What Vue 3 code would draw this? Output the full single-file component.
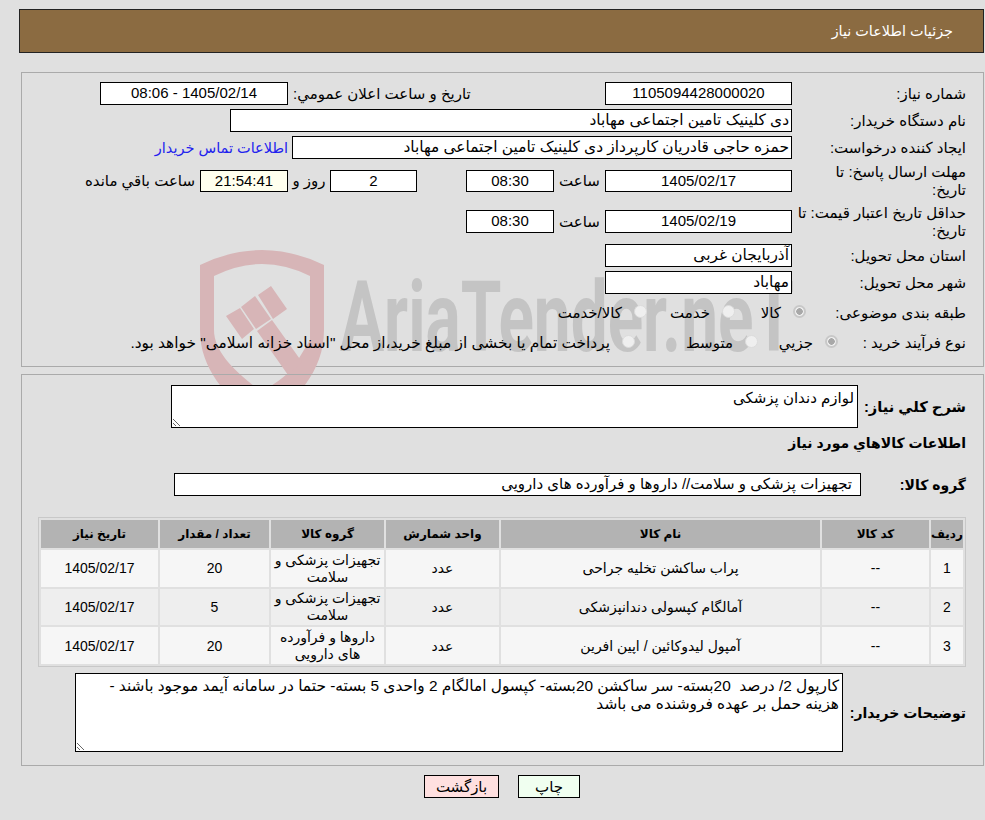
<script setup>
const rows = [
  { id: 1, code: '--', name: 'پراب ساکشن تخلیه جراحی', unit: 'عدد', group: 'تجهیزات پزشکی و سلامت', qty: 20, date: '1405/02/17' },
  { id: 2, code: '--', name: 'آمالگام کپسولی دندانپزشکی', unit: 'عدد', group: 'تجهیزات پزشکی و سلامت', qty: 5, date: '1405/02/17' },
  { id: 3, code: '--', name: 'آمپول لیدوکائین / اپین افرین', unit: 'عدد', group: 'داروها و فرآورده های دارویی', qty: 20, date: '1405/02/17' }
]
</script>

<template>
  <div class="page" dir="rtl">
    <div class="title-bar">جزئیات اطلاعات نیاز</div>

    <div class="panel panel-top">
      <!-- watermark sits behind the form -->
      <div class="watermark" aria-hidden="true">
        <svg class="wm-shield" viewBox="200 250 126 177" width="126" height="177">
          <path d="M200 265 Q262 235 324 265 L324 330 C324 372 296 400 262 425 C230 400 200 372 200 330 Z M214 276 L214 330 C214 352 235 372 262 392 C272 385 284 378 293 368 L310 340 L310 276 Q262 252 214 276 Z" fill="#d7b5b7" fill-rule="evenodd" />
          <path d="M226 316 L240 308 L254 329 L242 339 Z M241 307 L255 296 L271 319 L256 329 Z M258 295 L271 286 L287 309 L273 319 Z M257 331 L272 320 L302 362 L288 375 Z" fill="#d7b5b7" />
        </svg>
        <div class="wm-text">AriaTender.neT</div>
      </div>

      <div class="row">
        <span class="label">شماره نیاز:</span>
        <div class="field w-date">1105094428000020</div>
        <span class="inline-label announce">تاریخ و ساعت اعلان عمومي:</span>
        <div class="field w-announce">1405/02/14 - 08:06</div>
      </div>
      <div class="row">
        <span class="label">نام دستگاه خریدار:</span>
        <div class="field start w-buyer">دی کلینیک تامین اجتماعی مهاباد</div>
      </div>
      <div class="row">
        <span class="label">ایجاد کننده درخواست:</span>
        <div class="field start w-creator">حمزه حاجی قادریان کارپرداز دی کلینیک تامین اجتماعی مهاباد</div>
        <a class="contact" href="#">اطلاعات تماس خریدار</a>
      </div>
      <div class="row row-tall">
        <span class="label">مهلت ارسال پاسخ: تا<br />تاریخ:</span>
        <div class="field w-date">1405/02/17</div>
        <span class="inline-label hour">ساعت</span>
        <div class="field w-time">08:30</div>
        <div class="field w-days">2</div>
        <span class="inline-label days">روز و</span>
        <div class="field w-timer">21:54:41</div>
        <span class="inline-label remain">ساعت باقي مانده</span>
      </div>
      <div class="row row-tall">
        <span class="label">حداقل تاریخ اعتبار قیمت: تا<br />تاریخ:</span>
        <div class="field w-date">1405/02/19</div>
        <span class="inline-label hour">ساعت</span>
        <div class="field w-time">08:30</div>
      </div>
      <div class="row">
        <span class="label">استان محل تحویل:</span>
        <div class="field start w-date">آذربایجان غربی</div>
      </div>
      <div class="row">
        <span class="label">شهر محل تحویل:</span>
        <div class="field start w-date">مهاباد</div>
      </div>
      <div class="row radio-row">
        <span class="label label-subject">طبقه بندی موضوعی:</span>
        <div class="radios subject">
          <label><input type="radio" name="subject" checked disabled />کالا</label>
          <label><input type="radio" name="subject" disabled />خدمت</label>
          <label><input type="radio" name="subject" disabled />کالا/خدمت</label>
        </div>
      </div>
      <div class="row radio-row">
        <span class="label label-process">نوع فرآیند خرید :</span>
        <div class="radios process">
          <label><input type="radio" name="process" checked disabled />جزیي</label>
          <label><input type="radio" name="process" disabled />متوسط</label>
          <label class="long"><input type="radio" name="process" disabled />پرداخت تمام یا بخشی از مبلغ خرید،از محل "اسناد خزانه اسلامی" خواهد بود.</label>
        </div>
      </div>
    </div>

    <div class="panel panel-bottom">
      <div class="desc-row">
        <span class="strong-label">شرح کلي نياز:</span>
        <textarea class="area area-short" readonly>لوازم دندان پزشکی</textarea>
      </div>
      <h3 class="section-title">اطلاعات کالاهاي مورد نياز</h3>
      <div class="group-row">
        <span class="strong-label">گروه کالا:</span>
        <div class="field group-field">تجهیزات پزشکی و سلامت// داروها و فرآورده های دارویی</div>
      </div>

      <table class="items">
        <thead>
          <tr>
            <th class="c-id">ردیف</th>
            <th class="c-code">کد کالا</th>
            <th class="c-name">نام کالا</th>
            <th class="c-unit">واحد شمارش</th>
            <th class="c-group">گروه کالا</th>
            <th class="c-qty">تعداد / مقدار</th>
            <th>تاریخ نیاز</th>
          </tr>
        </thead>
        <tbody>
          <tr v-for="row in rows" :key="row.id">
            <td>{{ row.id }}</td>
            <td>{{ row.code }}</td>
            <td>{{ row.name }}</td>
            <td>{{ row.unit }}</td>
            <td>{{ row.group }}</td>
            <td>{{ row.qty }}</td>
            <td>{{ row.date }}</td>
          </tr>
        </tbody>
      </table>

      <div class="notes-row">
        <span class="strong-label">توضیحات خریدار:</span>
        <textarea class="area area-notes" readonly>کارپول 2/ درصد  20بسته- سر ساکشن 20بسته- کپسول امالگام 2 واحدی 5 بسته- حتما در سامانه آیمد موجود باشند - هزینه حمل بر عهده فروشنده می باشد</textarea>
      </div>
    </div>

    <div class="actions">
      <button class="btn btn-print">چاپ</button>
      <button class="btn btn-back">بازگشت</button>
    </div>
  </div>
</template>

<style>
html, body {
  margin: 0;
  background: #e0e0e0;
}
</style>

<style scoped>
.page {
  width: 985px;
  height: 820px;
  box-sizing: border-box;
  padding-top: 9px;
  font-family: "Liberation Sans", "DejaVu Sans", sans-serif;
  font-size: 15px;
  color: #000;
  overflow: hidden;
}

.title-bar {
  width: 963px;
  height: 42px;
  margin-right: 1px;
  border: 1px solid #222;
  background: #8b6b41;
  color: #fff;
  font-size: 14.4px;
  line-height: 42px;
  text-indent: 30px;
}

.panel {
  position: relative;
  box-sizing: border-box;
  width: 963px;
  margin-right: 1px;
  border: 1px solid #aaa;
}

.panel-top {
  height: 295px;
  margin-top: 19px;
  padding-top: 9px;
}

.panel-bottom {
  height: 392px;
  margin-top: 7px;
  padding-top: 10px;
}

.watermark {
  position: absolute;
  inset: 0;
  z-index: 0;
}

.wm-shield {
  position: absolute;
  left: 178px;
  top: 177px;
}

.wm-text {
  position: absolute;
  left: 318px;
  top: 195px;
  direction: ltr;
  font-family: "Roboto", sans-serif;
  font-weight: 700;
  font-size: 98px;
  line-height: 100px;
  color: #c4c4c4;
  white-space: nowrap;
  transform: scaleX(0.67);
  transform-origin: left top;
}

.row {
  position: relative;
  z-index: 1;
  display: flex;
  align-items: center;
  height: 23px;
  margin-bottom: 4px;
}

.row-tall {
  height: 22px;
  margin-top: 11px;
  margin-bottom: 18px;
}

.row-tall + .row-tall {
  height: 23px;
  margin-top: 18px;
  margin-bottom: 11px;
}

.row-tall .label {
  line-height: 18px;
}

.label {
  flex: none;
  width: 191px;
  padding-right: 17px;
  box-sizing: border-box;
}

.label-subject { width: 177px; }
.label-process { width: 145px; }

.field {
  box-sizing: border-box;
  flex: none;
  height: 100%;
  border: 1px solid #000;
  background: #fff;
  text-align: center;
  line-height: 20px;
  white-space: nowrap;
  overflow: hidden;
}

.field.start {
  text-align: right;
  padding-right: 2px;
  font-size: 15.4px;
}

.w-date { width: 187px; }
.w-announce { width: 188px; }
.w-buyer { width: 562px; }
.w-creator { width: 500px; }
.w-time { width: 88px; }
.w-days { width: 87px; margin-right: 49px; }

.w-timer {
  width: 88px;
  background: #ffffee;
}

.inline-label {
  flex: none;
  white-space: nowrap;
}

.announce {
  width: 317px;
  box-sizing: border-box;
  padding-left: 5px;
  text-align: left;
}

.hour { width: 51px; text-align: center; }
.days { width: 42px; text-align: center; }
.remain { margin-right: 5px; }

.contact {
  margin-right: 4px;
  color: #2222ee;
  font-size: 14.5px;
  text-decoration: none;
  white-space: nowrap;
}

.radio-row {
  height: 26px;
  margin-top: 6px;
  margin-bottom: 0;
}

.radio-row + .radio-row {
  margin-top: 4px;
}

.radios {
  display: flex;
  align-items: center;
}

.radios label {
  display: flex;
  align-items: center;
  white-space: nowrap;
}

.radios label.long {
  font-size: 15.4px;
}

.radios input {
  appearance: none;
  flex: none;
  box-sizing: border-box;
  width: 13px;
  height: 13px;
  margin: -4px 0 0 12px;
  border: 1px solid #dcdcdc;
  border-radius: 50%;
  background: #efefef;
}

.radios input:checked {
  border: 2px solid #c8c8c8;
  background: radial-gradient(circle, #a8a8a8 0 3px, #efefef 3.5px);
}

.subject label:nth-child(1) { width: 71px; }
.subject label:nth-child(2) { width: 88px; }
.process label:nth-child(1) { width: 80px; }
.process label:nth-child(2) { width: 123px; }

.desc-row {
  display: flex;
  align-items: center;
  height: 43px;
}

.strong-label {
  flex: none;
  font-weight: 700;
  font-size: 14px;
  padding-right: 17px;
  box-sizing: border-box;
  white-space: nowrap;
}

.desc-row .strong-label {
  width: 125px;
  font-size: 14.7px;
}

.area {
  display: block;
  box-sizing: border-box;
  margin: 0;
  padding: 3px 3px 2px;
  border: 1px solid #000;
  background: #fff;
  font-family: inherit;
  font-size: 15px;
  line-height: 18px;
  color: #000;
  outline: none;
}

.area-short {
  width: 687px;
  height: 43px;
}

.section-title {
  margin: 0;
  height: 30px;
  padding: 5px 17px 0 0;
  font-size: 14px;
  font-weight: 700;
  line-height: 20px;
}

.group-row {
  display: flex;
  align-items: center;
  height: 23px;
  margin-top: 10px;
}

.group-row .strong-label { width: 122px; }

.group-field {
  width: 687px;
  text-align: right;
  padding-right: 8px;
}

.items {
  width: 928px;
  height: 150px;
  margin: 21px 17px 0 0;
  border: 1px solid #c8c8c8;
  border-spacing: 2px;
  table-layout: fixed;
  box-sizing: border-box;
  font-size: 14px;
}

.items th {
  height: 28px;
  padding: 0;
  background: #b3b3b3;
  font-size: 12px;
  font-weight: 700;
}

.items td {
  padding: 1px 2px 0;
  text-align: center;
  line-height: 17px;
  background: #f6f6f6;
}

.items tbody tr:nth-child(even) td {
  background: #eeeeee;
}

.c-id { width: 32px; }
.c-code { width: 107px; }
.c-name { width: 319px; }
.c-unit { width: 113px; }
.c-group { width: 113px; }
.c-qty { width: 109px; }

.notes-row {
  display: flex;
  align-items: center;
  margin-top: 6px;
  height: 79px;
}

.notes-row .strong-label { width: 140px; }

.area-notes {
  width: 768px;
  height: 79px;
  padding-left: 25px;
  font-size: 15.4px;
}

.actions {
  display: flex;
  justify-content: center;
  gap: 19px;
  margin-top: 9px;
  padding-left: 19px;
}

.btn {
  box-sizing: border-box;
  height: 23px;
  padding: 0;
  border: 1px solid #000;
  font-family: inherit;
  font-size: 15px;
  color: #000;
}

.btn-print { width: 62px; background: #f0fff0; }
.btn-back { width: 75px; background: #ffe0e0; }
</style>
